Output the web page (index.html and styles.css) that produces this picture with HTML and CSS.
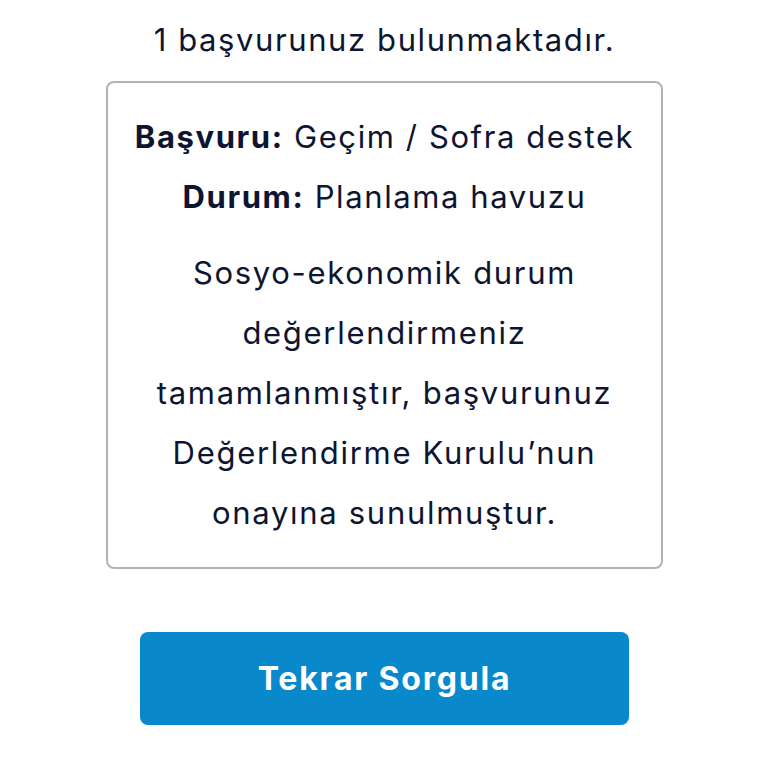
FILE: index.html
```html
<!DOCTYPE html>
<html lang="tr">
<head>
<meta charset="utf-8">
<link rel="stylesheet" href="styles.css">
</head>
<body>
<main class="page">
  <p class="count">1 başvurunuz bulunmaktadır.</p>
  <section class="card">
    <p class="row"><strong>Başvuru:</strong> Geçim / Sofra destek</p>
    <p class="row"><strong>Durum:</strong> Planlama havuzu</p>
    <p class="desc">Sosyo-ekonomik durum<br>değerlendirmeniz<br>tamamlanmıştır, başvurunuz<br>Değerlendirme Kurulu’nun<br>onayına sunulmuştur.</p>
  </section>
  <button class="btn">Tekrar Sorgula</button>
</main>
</body>
</html>
```

FILE: styles.css
```css
html, body {
  margin: 0;
  padding: 0;
  background: #ffffff;
}
.page {
  display: flex;
  flex-direction: column;
  align-items: center;
  font-family: "Inter", "Noto Sans", sans-serif;
  color: #0d1531;
  padding-left: 1px;
}
.count {
  margin: 18px 0 0;
  font-size: 31px;
  line-height: 44px;
  letter-spacing: 1.6px;
}
.card {
  margin-top: 19px;
  width: 553px;
  border: 2px solid #b3b3b3;
  border-radius: 8px;
  padding: 24px 0;
  text-align: center;
}
.row {
  margin: 0;
  font-size: 31px;
  line-height: 60px;
  letter-spacing: 1.6px;
}
.row strong {
  font-weight: 700;
}
.desc {
  margin: 16px 0 0;
  font-size: 31px;
  line-height: 60px;
  letter-spacing: 1.7px;
}
.btn {
  margin-top: 63px;
  width: 489px;
  height: 93px;
  border: none;
  border-radius: 8px;
  background: #0988cb;
  color: #ffffff;
  font-family: "Inter", "Noto Sans", sans-serif;
  font-weight: 700;
  font-size: 32px;
  letter-spacing: 1.8px;
}
```
